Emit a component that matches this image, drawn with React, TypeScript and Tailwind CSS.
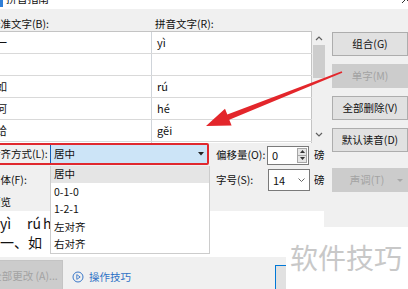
import clsx from "clsx";

const rows = [
  { han: "一", py: "yì" },
  { han: "", py: "" },
  { han: "如", py: "rú" },
  { han: "何", py: "hé" },
  { han: "给", py: "gěi" },
  { han: "文", py: "wén" },
];

const options = ["居中", "0-1-0", "1-2-1", "左对齐", "右对齐"];

function Chevron({ up }: { up?: boolean }) {
  return (
    <svg width="8" height="5" viewBox="0 0 8 5">
      <polyline
        points={up ? "1,4 4,1 7,4" : "1,1 4,4 7,1"}
        fill="none"
        stroke="#606060"
        strokeWidth="1.2"
      />
    </svg>
  );
}

function SideButton({
  label,
  disabled,
  arrow,
}: {
  label: string;
  disabled?: boolean;
  arrow?: boolean;
}) {
  return (
    <div
      className={clsx(
        "relative h-[24px] flex items-center justify-center border",
        disabled
          ? "bg-[#cccccc] border-[#cccccc] text-[#a3a3a3]"
          : "bg-[#e1e1e1] border-[#adadad] text-[#111]"
      )}
    >
      <span className={clsx(arrow && "-ml-[6px]")}>{label}</span>
      {arrow && (
        <svg className="absolute right-[4px] top-[10px]" width="6" height="4" viewBox="0 0 6 4">
          <polygon points="0,0 6,0 3,3" fill="#a8a8a8" />
        </svg>
      )}
    </div>
  );
}

export default function App() {
  return (
    <div className="relative w-[408px] h-[289px] overflow-hidden bg-[#f0f0f0] font-['Noto_Sans_CJK_SC',sans-serif] text-[10.5px] leading-none text-[#111]">
      {/* title bar, mostly cut off */}
      <div className="h-[9px] bg-white overflow-hidden">
        <div className="-mt-[8px] h-[13px] flex items-center">
          <div className="w-[3px] h-[14px] mt-[2px] bg-[#2f7fd8]" />
          <span className="ml-[3px] text-[11px] tracking-[-0.3px]">拼音指南</span>
          <svg className="ml-auto -mr-[3px]" width="10" height="10" viewBox="0 0 10 10">
            <path d="M1 1 L9 9 M9 1 L1 9" stroke="#333" strokeWidth="1" />
          </svg>
        </div>
      </div>

      <div className="flex -ml-[14px]">
        {/* left area */}
        <div className="w-[340px] flex flex-col">
          {/* column labels */}
          <div className="h-[22px] flex items-start pt-[10px]">
            <span className="pl-[4px] w-[169px]">标准文字(B):</span>
            <span>拼音文字(R):</span>
          </div>

          {/* pinyin table */}
          <div className="h-[112px] flex ml-[5px]">
            <div className="w-[321px] h-[112px] overflow-hidden bg-white border-t border-[#c4c4c4]">
              {rows.map((r, i) => (
                <div key={i} className="h-[22px] flex border-b border-[#d9d9d9] text-[11px]">
                  <div className="w-[161px] pl-[5px] flex items-center border-r border-[#cfd4da]">{r.han}</div>
                  <div className="w-[160px] pl-[5px] flex items-center border-r border-[#c4c4c4]">{r.py}</div>
                </div>
              ))}
            </div>
            <div className="w-[14px] h-[112px] flex flex-col items-center">
              <div className="h-[14px] flex items-center pt-[1px]">
                <Chevron up />
              </div>
              <div className="w-[12px] h-[33px] bg-[#cdcdcd]" />
              <div className="mt-auto h-[14px] flex items-center mb-[2px]">
                <Chevron />
              </div>
            </div>
          </div>

          {/* alignment + offset row */}
          <div className="h-[24px] flex items-start">
            <div className="w-[223px] h-[22px] flex items-center border-2 border-[#e0282e] rounded-[2px]">
              <span className="pl-[2px] w-[62px]">对齐方式(L):</span>
              <div className="flex-1 h-full flex items-center bg-[#cce4f7] border-l border-[#1560b8] pl-[3px] pr-[3px]">
                <span>居中</span>
                <svg className="ml-auto" width="6" height="4" viewBox="0 0 6 4">
                  <polygon points="0,0 6,0 3,3.5" fill="#222" />
                </svg>
              </div>
            </div>
            <div className="ml-[7px] h-[24px] flex items-center">
              <span className="w-[51px]">偏移量(O):</span>
              <div className="w-[42px] h-[19px] flex items-center bg-white border border-[#7a7a7a]">
                <span className="flex-1 pl-[4px] text-[11px]">0</span>
                <div className="w-[10px] h-[15px] mr-[1px] flex flex-col">
                  <div className="flex-1 flex items-center justify-center bg-[#e6e6e6] border border-[#a6a6a6]">
                    <svg width="5" height="3" viewBox="0 0 5 3">
                      <polygon points="0,3 5,3 2.5,0" fill="#333" />
                    </svg>
                  </div>
                  <div className="flex-1 flex items-center justify-center bg-[#e6e6e6] border border-t-0 border-[#a6a6a6]">
                    <svg width="5" height="3" viewBox="0 0 5 3">
                      <polygon points="0,0 5,0 2.5,3" fill="#333" />
                    </svg>
                  </div>
                </div>
              </div>
              <span className="ml-[5px]">磅</span>
            </div>
          </div>

          {/* font + size row */}
          <div className="h-[26px] flex items-center">
            <div className="w-[223px] flex items-center">
              <span className="pl-[4px]">字体(F):</span>
            </div>
            <div className="ml-[7px] flex items-center">
              <span className="w-[52px]">字号(S):</span>
              <div className="w-[42px] h-[22px] flex items-center bg-white border border-[#7a7a7a] pl-[4px] pr-[4px]">
                <span className="text-[11px]">14</span>
                <svg className="ml-auto" width="7" height="4" viewBox="0 0 7 4">
                  <polyline points="0.5,0.5 3.5,3.5 6.5,0.5" fill="none" stroke="#666" strokeWidth="1" />
                </svg>
              </div>
              <span className="ml-[4px]">磅</span>
            </div>
          </div>

          {/* preview */}
          <div className="h-[18px] flex items-center pl-[4px]">预览</div>
          <div className="w-[338px] h-[46px] bg-white flex flex-col pl-[14px] pt-[4px] text-[14px]">
            <div className="h-[16px] leading-[16px] flex whitespace-nowrap">
              <span className="w-[27px]">yì</span>
              <span className="w-[16px]">rú</span>
              <span className="w-[22px]">hé</span>
              <span>gěi</span>
            </div>
            <div className="h-[22px] leading-[22px] flex whitespace-nowrap">
              <span>一、如</span>
              <span className="ml-[8px]">何给</span>
            </div>
          </div>
        </div>

        {/* right buttons */}
        <div className="ml-[6px] w-[78px] flex flex-col pt-[23px]">
          <SideButton label="组合(G)" />
          <div className="mt-[8px]">
            <SideButton label="单字(M)" disabled />
          </div>
          <div className="mt-[8px]">
            <SideButton label="全部删除(V)" />
          </div>
          <div className="mt-[8px]">
            <SideButton label="默认读音(D)" />
          </div>
          <div className="mt-[16px]">
            <SideButton label="声调(T)" disabled arrow />
          </div>
        </div>
      </div>

      {/* bottom row */}
      <div className="h-[32px] flex items-start pt-[3px] -ml-[14px]">
        <div className="w-[77px] h-[32px] flex items-center justify-center bg-[#cccccc] border border-[#c4c4c4] text-[#a3a3a3] whitespace-nowrap">
          全部更改 (A)...
        </div>
        <div className="ml-[9px] w-[203px] mt-[11px] h-[12px] flex items-center">
          <svg width="12" height="12" viewBox="0 0 12 12">
            <circle cx="6" cy="6" r="5" fill="none" stroke="#3a78c9" strokeWidth="1" />
            <polygon points="4.8,3.6 8.2,6 4.8,8.4" fill="none" stroke="#3a78c9" strokeWidth="0.9" />
          </svg>
          <span className="ml-[5px] text-[#2f72c6] text-[10.5px]">操作技巧</span>
        </div>
        <div className="mt-[5px] w-[80px] h-[30px] bg-[#e1e1e1] border border-[#0078d7]" />
      </div>

      {/* open dropdown list */}
      <div className="absolute left-[50px] top-[166px] w-[160px] h-[88px] bg-white border border-[#cccccc] border-t-0 flex flex-col">
        {options.map((o, i) => (
          <div
            key={o}
            className={clsx("h-[17.5px] flex items-center pl-[3px]", i === 0 && "bg-[#e5e5e5]")}
          >
            {o}
          </div>
        ))}
      </div>

      {/* red annotation arrow */}
      <svg className="absolute left-0 top-0 pointer-events-none" width="408" height="289" viewBox="0 0 408 289">
        <polygon
          points="342.3,72.7 229.3,119.7 231.6,125.5 206,126 225,108.8 227.3,114.5 341.7,71.3"
          fill="#e3262b"
        />
      </svg>

      {/* watermark */}
      <div className="absolute left-[286px] top-[227px] w-[122px] h-[62px] bg-white pl-[4px] pt-[16px]">
        <span className="text-[28px] leading-[28px] text-[#c8c8c8] whitespace-nowrap">软件技巧</span>
      </div>
    </div>
  );
}
